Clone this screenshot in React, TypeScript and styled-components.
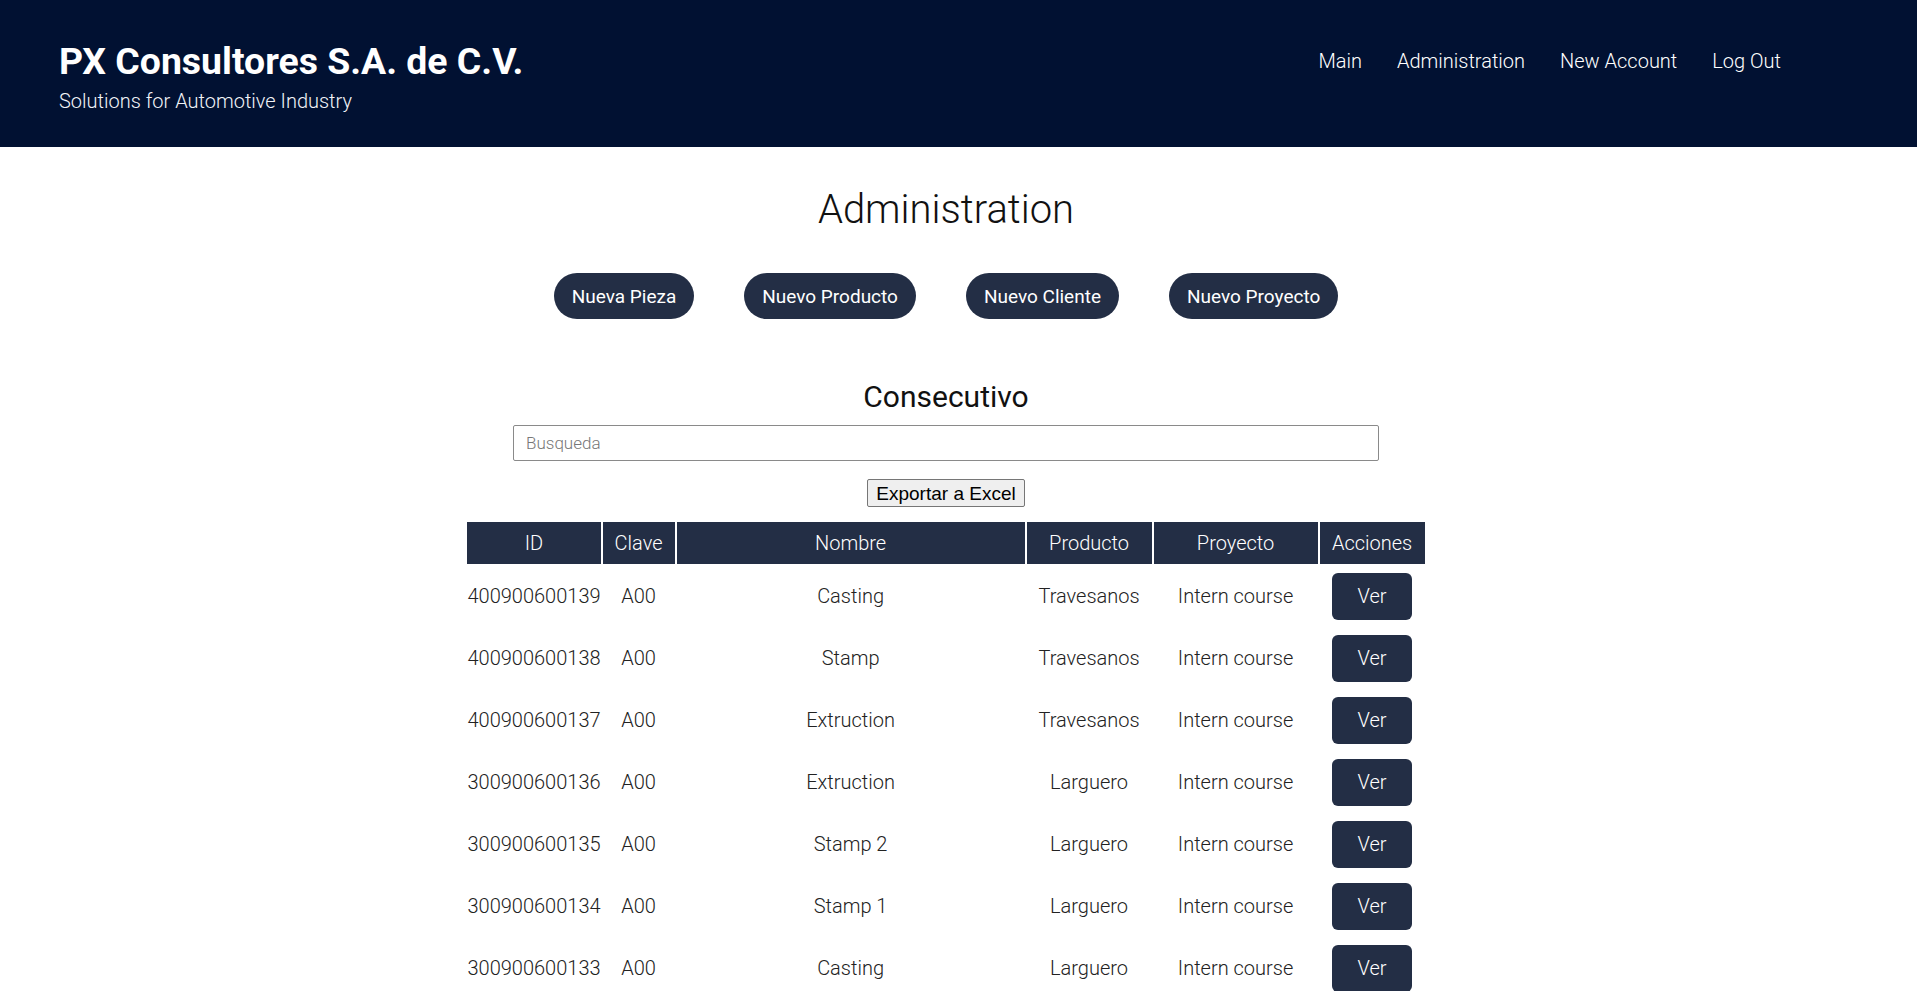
import React from 'react'
import styled, { createGlobalStyle } from 'styled-components'

const GlobalStyle = createGlobalStyle`
  html, body {
    margin: 0;
    padding: 0;
    background: #fff;
    font-family: Roboto, "Noto Sans", Arial, sans-serif;
  }
  * {
    box-sizing: border-box;
  }
`

interface Row {
  id: string
  clave: string
  nombre: string
  producto: string
  proyecto: string
}

const firstRows: Row[] = [
  { id: '400900600139', clave: 'A00', nombre: 'Casting', producto: 'Travesanos', proyecto: 'Intern course' },
  { id: '400900600138', clave: 'A00', nombre: 'Stamp', producto: 'Travesanos', proyecto: 'Intern course' },
  { id: '400900600137', clave: 'A00', nombre: 'Extruction', producto: 'Travesanos', proyecto: 'Intern course' },
  { id: '300900600136', clave: 'A00', nombre: 'Extruction', producto: 'Larguero', proyecto: 'Intern course' },
  { id: '300900600135', clave: 'A00', nombre: 'Stamp 2', producto: 'Larguero', proyecto: 'Intern course' },
  { id: '300900600134', clave: 'A00', nombre: 'Stamp 1', producto: 'Larguero', proyecto: 'Intern course' },
  { id: '300900600133', clave: 'A00', nombre: 'Casting', producto: 'Larguero', proyecto: 'Intern course' },
]

// older records further down the list
const names = ['Casting', 'Stamp', 'Extruction', 'Stamp 2', 'Stamp 1']
const products = ['Larguero', 'Travesanos', 'Soporte']
const moreRows: Row[] = Array.from({ length: 132 }, (_, i) => {
  const n = 132 - i
  const prefix = n > 66 ? '2' : '1'
  return {
    id: `${prefix}00900600${String(n).padStart(3, '0')}`,
    clave: 'A00',
    nombre: names[i % names.length],
    producto: products[Math.floor(i / 10) % products.length],
    proyecto: 'Intern course',
  }
})

const rows = [...firstRows, ...moreRows]

const adminButtons = ['Nueva Pieza', 'Nuevo Producto', 'Nuevo Cliente', 'Nuevo Proyecto']
const navLinks = ['Main', 'Administration', 'New Account', 'Log Out']

const App = () => {
  return (
    <>
      <GlobalStyle />
      <Header>
        <Brand>
          <h1>PX Consultores S.A. de C.V.</h1>
          <p>Solutions for Automotive Industry</p>
        </Brand>
        <Nav>
          {navLinks.map((l) => (
            <a key={l} href="#">
              {l}
            </a>
          ))}
        </Nav>
      </Header>
      <Main>
        <Title>Administration</Title>
        <ActionRow>
          {adminButtons.map((b) => (
            <PillButton key={b} type="button">
              {b}
            </PillButton>
          ))}
        </ActionRow>
        <SubTitle>Consecutivo</SubTitle>
        <Search type="text" placeholder="Busqueda" />
        <ExportButton type="button">Exportar a Excel</ExportButton>
        <Table>
          <colgroup>
            <col style={{ width: 133 }} />
            <col style={{ width: 72 }} />
            <col style={{ width: 348 }} />
            <col style={{ width: 125 }} />
            <col style={{ width: 164 }} />
            <col style={{ width: 105 }} />
          </colgroup>
          <thead>
            <tr>
              <th>ID</th>
              <th>Clave</th>
              <th>Nombre</th>
              <th>Producto</th>
              <th>Proyecto</th>
              <th>Acciones</th>
            </tr>
          </thead>
          <tbody>
            {rows.map((r, i) => (
              <tr key={r.id + i}>
                <td>{r.id}</td>
                <td>{r.clave}</td>
                <td>{r.nombre}</td>
                <td>{r.producto}</td>
                <td>{r.proyecto}</td>
                <td>
                  <ViewButton type="button">Ver</ViewButton>
                </td>
              </tr>
            ))}
          </tbody>
        </Table>
      </Main>
    </>
  )
}

const Header = styled.header`
  display: flex;
  justify-content: space-between;
  align-items: flex-start;
  height: 147px;
  padding: 39px 136px 0 59px;
  background: #011132;
  color: #fff;
`
const Brand = styled.div`
  h1 {
    margin: 0;
    font-size: 37.4px;
    line-height: 1.2;
    font-weight: 700;
  }
  p {
    margin: 5px 0 0;
    font-size: 20px;
    line-height: 1.2;
    font-weight: 300;
    color: #f2f4f8;
  }
`
const Nav = styled.nav`
  display: flex;
  gap: 35px;
  padding-top: 10px;
  a {
    color: #fff;
    text-decoration: none;
    font-size: 20px;
    line-height: 1.2;
    font-weight: 300;
  }
`
const Main = styled.main`
  display: flex;
  flex-direction: column;
  align-items: center;
  padding: 39px 25px 0 0;
  color: #222;
`
const Title = styled.h2`
  margin: 0;
  font-size: 40px;
  line-height: 1.2;
  font-weight: 300;
  color: #111;
`
const ActionRow = styled.div`
  display: flex;
  gap: 50px;
  margin-top: 39px;
`
const PillButton = styled.button`
  height: 46px;
  padding: 0 18px;
  border: 0;
  border-radius: 23px;
  background: #232e45;
  color: #fff;
  font-family: Roboto, sans-serif;
  font-size: 19px;
  font-weight: 400;
  cursor: pointer;
`
const SubTitle = styled.h3`
  margin: 60px 0 0;
  font-size: 30px;
  line-height: 1.2;
  font-weight: 400;
  color: #111;
`
const Search = styled.input`
  width: 866px;
  height: 36px;
  margin-top: 10px;
  padding: 0 12px;
  border: 1px solid #8a8a8a;
  border-radius: 2px;
  font-family: Roboto, sans-serif;
  font-size: 17px;
  font-weight: 300;
  &::placeholder {
    color: #777;
  }
`
const ExportButton = styled.button`
  height: 28px;
  margin-top: 18px;
  padding: 0 8px;
  border: 1px solid #767676;
  border-radius: 2px;
  background: #efefef;
  color: #000;
  font-family: "Liberation Sans", Arial, sans-serif;
  font-size: 19px;
  line-height: 1;
`
const Table = styled.table`
  margin-top: 13px;
  table-layout: fixed;
  border-spacing: 2px;
  th {
    height: 42px;
    padding: 0;
    background: #232e45;
    color: #fff;
    font-size: 20px;
    font-weight: 300;
  }
  td {
    padding: 6.5px 0;
    text-align: center;
    font-size: 20px;
    font-weight: 300;
    color: #222;
    white-space: nowrap;
  }
`
const ViewButton = styled.button`
  display: block;
  margin: 0 auto;
  width: 80px;
  height: 47px;
  border: 0;
  border-radius: 6px;
  background: #232e45;
  color: #fff;
  font-family: Roboto, sans-serif;
  font-size: 20px;
  font-weight: 300;
  cursor: pointer;
`

export default App
